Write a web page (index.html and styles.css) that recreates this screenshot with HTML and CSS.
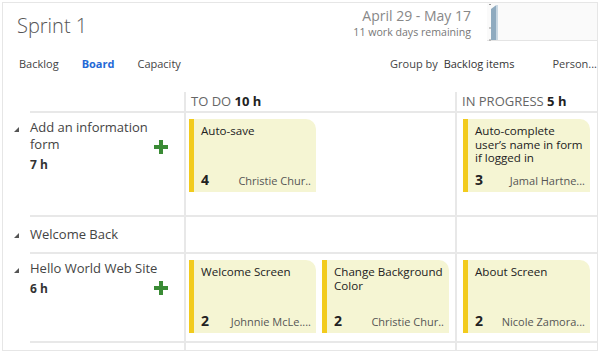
FILE: index.html
```html
<!DOCTYPE html>
<html lang="en">

<head>
    <meta charset="UTF-8">
    <meta name="viewport" content="width=device-width, initial-scale=1.0">
    <title>Sprint 1</title>
    <link rel="stylesheet" href="styles.css">
</head>

<body>
    <div class="page">
        <!-- 顶部：标题 + 日期 + 燃尽图 -->
        <div class="top">
            <h1 class="sprint">Sprint 1</h1>
            <div class="dates">
                <div class="range">April 29 - May 17</div>
                <div class="remaining">11 work days remaining</div>
            </div>
            <div class="burndown">
                <svg width="110" height="38" viewBox="0 0 110 38">
                    <rect x="2.5" y="1" width="1" height="1" fill="#333"/>
                    <rect x="2.5" y="24.5" width="1" height="1" fill="#333"/>
                    <rect x="2.5" y="36.5" width="1" height="1" fill="#333"/>
                    <polygon points="4,6 6,4.5 8,3 9.5,2 9.5,37 4,37" fill="#8eaabf"/>
                    <rect x="9.5" y="2" width="1.5" height="35" fill="#c9d8e3"/>
                </svg>
            </div>
        </div>

        <!-- 标签栏 -->
        <div class="tabs">
            <a class="tab">Backlog</a>
            <a class="tab active">Board</a>
            <a class="tab">Capacity</a>
            <div class="group">Group by <span class="group-value">Backlog items</span></div>
            <div class="person">Person...</div>
        </div>

        <!-- 看板 -->
        <div class="board">
            <div class="lane head">
                <div></div>
                <div></div>
                <div class="col">TO DO <b>10 h</b></div>
                <div class="col">IN PROGRESS <b>5 h</b></div>
            </div>

            <div class="lane lane1">
                <div class="tri-cell"><span class="tri"></span></div>
                <div class="story">
                    <div class="story-title">Add an information form</div>
                    <span class="add"><svg width="14" height="14" viewBox="0 0 14 14"><rect x="0" y="5" width="14" height="4" fill="#3a8b35"/><rect x="5" y="0" width="4" height="14" fill="#3a8b35"/></svg></span>
                    <div class="effort">7 h</div>
                </div>
                <div class="col cards">
                    <div class="card">
                        <div class="card-title">Auto-save</div>
                        <div class="card-foot"><b>4</b><span>Christie Chur..</span></div>
                    </div>
                </div>
                <div class="col cards doing">
                    <div class="card">
                        <div class="card-title">Auto-complete user’s name in form if logged in</div>
                        <div class="card-foot"><b>3</b><span>Jamal Hartne...</span></div>
                    </div>
                </div>
            </div>

            <div class="lane lane2">
                <div class="tri-cell"><span class="tri"></span></div>
                <div class="story">
                    <div class="story-title">Welcome Back</div>
                </div>
                <div class="col"></div>
                <div class="col"></div>
            </div>

            <div class="lane lane3">
                <div class="tri-cell"><span class="tri"></span></div>
                <div class="story">
                    <div class="story-title">Hello World Web Site</div>
                    <span class="add"><svg width="14" height="14" viewBox="0 0 14 14"><rect x="0" y="5" width="14" height="4" fill="#3a8b35"/><rect x="5" y="0" width="4" height="14" fill="#3a8b35"/></svg></span>
                    <div class="effort">6 h</div>
                </div>
                <div class="col cards">
                    <div class="card">
                        <div class="card-title">Welcome Screen</div>
                        <div class="card-foot"><b>2</b><span>Johnnie McLe....</span></div>
                    </div>
                    <div class="card">
                        <div class="card-title">Change Background Color</div>
                        <div class="card-foot"><b>2</b><span>Christie Chur..</span></div>
                    </div>
                </div>
                <div class="col cards doing">
                    <div class="card">
                        <div class="card-title">About Screen</div>
                        <div class="card-foot"><b>2</b><span>Nicole Zamora...</span></div>
                    </div>
                </div>
            </div>

            <div class="lane tail">
                <div></div>
                <div class="story"></div>
                <div class="col"></div>
                <div class="col"></div>
            </div>
        </div>
    </div>
</body>

</html>
```

FILE: styles.css
```css
* {
    margin: 0;
    padding: 0;
    box-sizing: border-box;
}

body {
    font-family: "Open Sans", "Noto Sans", sans-serif;
    color: #444;
    background-color: #fff;
}

/* 外框 */
.page {
    width: 596px;
    height: 349px;
    margin: 2px 0 0 2px;
    border: 1px solid #e6e6e6;
    display: flex;
    flex-direction: column;
    overflow: hidden;
}

/* 顶部 */
.top {
    height: 39px;
    display: flex;
    align-items: flex-start;
}

.sprint {
    flex: 1;
    margin: 11px 0 0 14px;
    font-size: 20px;
    line-height: 24px;
    font-weight: 300;
    color: #555;
}

.dates {
    margin: 4px 16px 0 0;
    text-align: right;
}

.range {
    font-size: 14px;
    line-height: 18px;
    color: #888;
}

.remaining {
    font-size: 10.6px;
    line-height: 14px;
    color: #777;
}

.burndown {
    width: 110px;
    height: 38px;
    background-color: #fafafa;
    border-bottom: 1px solid #e4e4e4;
}

.burndown svg {
    display: block;
}

/* 标签栏 */
.tabs {
    height: 50px;
    display: flex;
    align-items: flex-start;
    padding: 14px 0 0 16px;
    font-size: 11px;
    line-height: 16px;
    white-space: nowrap;
}

.tab {
    margin-right: 23px;
    color: #444;
}

.tab.active {
    color: #2368d6;
    font-weight: bold;
}

.group {
    margin-left: auto;
    color: #444;
}

.group-value {
    margin-left: 3px;
    color: #333;
}

.person {
    margin-left: 38px;
    color: #444;
}

/* 看板 */
.board {
    flex: 1;
    display: flex;
    flex-direction: column;
}

.lane {
    display: grid;
    grid-template-columns: 27px 154px 271px 1fr;
}

.col {
    border-left: 2px solid #e8e8e8;
}

.lane:not(.head) .story,
.lane:not(.head) .col {
    border-top: 2px solid #e8e8e8;
}

.head {
    height: 19px;
    line-height: 19px;
    font-size: 13px;
    color: #666;
}

.head .col {
    padding-left: 5px;
    white-space: nowrap;
}

.head b {
    color: #222;
}

.lane1 {
    height: 104px;
}

.lane2 {
    height: 37px;
}

.lane3 {
    height: 89px;
}

.tail {
    flex: 1;
}

/* 行标题 */
.tri-cell {
    padding: 16px 0 0 11px;
}

.lane2 .tri-cell {
    padding-top: 18px;
}

.tri {
    display: block;
    width: 0;
    height: 0;
    border-style: solid;
    border-width: 0 0 5px 5px;
    border-color: transparent transparent #555 transparent;
}

/* 标题占满整行，加号叠在右侧 */
.story {
    display: grid;
    grid-template-columns: 1fr 14px;
    align-content: start;
    padding: 6px 16px 0 0;
}

.lane2 .story {
    padding-top: 9px;
}

.story-title {
    grid-column: 1 / 3;
    grid-row: 1;
    font-size: 13px;
    line-height: 17px;
    color: #444;
}

.add {
    grid-column: 2;
    grid-row: 1 / 3;
    align-self: start;
    margin-top: 21px;
    width: 14px;
    height: 14px;
}

.add svg {
    display: block;
}

.effort {
    grid-column: 1;
    grid-row: 2;
    margin-top: 4px;
    font-size: 12px;
    line-height: 16px;
    font-weight: bold;
    color: #333;
}

/* 卡片 */
.cards {
    display: flex;
    align-items: flex-start;
    gap: 6px;
    padding: 6px 0 0 3px;
}

.cards.doing {
    padding-left: 6px;
}

.card {
    width: 127px;
    height: 73px;
    display: flex;
    flex-direction: column;
    justify-content: space-between;
    padding: 5px 5px 3px 7px;
    border-left: 5px solid #f2cb1d;
    border-top-right-radius: 10px;
    background-color: #f5f5d3;
}

.card-title {
    font-size: 11.6px;
    line-height: 13.5px;
    color: #222;
}

.card-foot {
    display: flex;
    justify-content: space-between;
    align-items: baseline;
    white-space: nowrap;
}

.card-foot b {
    font-size: 14px;
    color: #222;
}

.card-foot span {
    font-size: 11px;
    color: #555;
}
```
